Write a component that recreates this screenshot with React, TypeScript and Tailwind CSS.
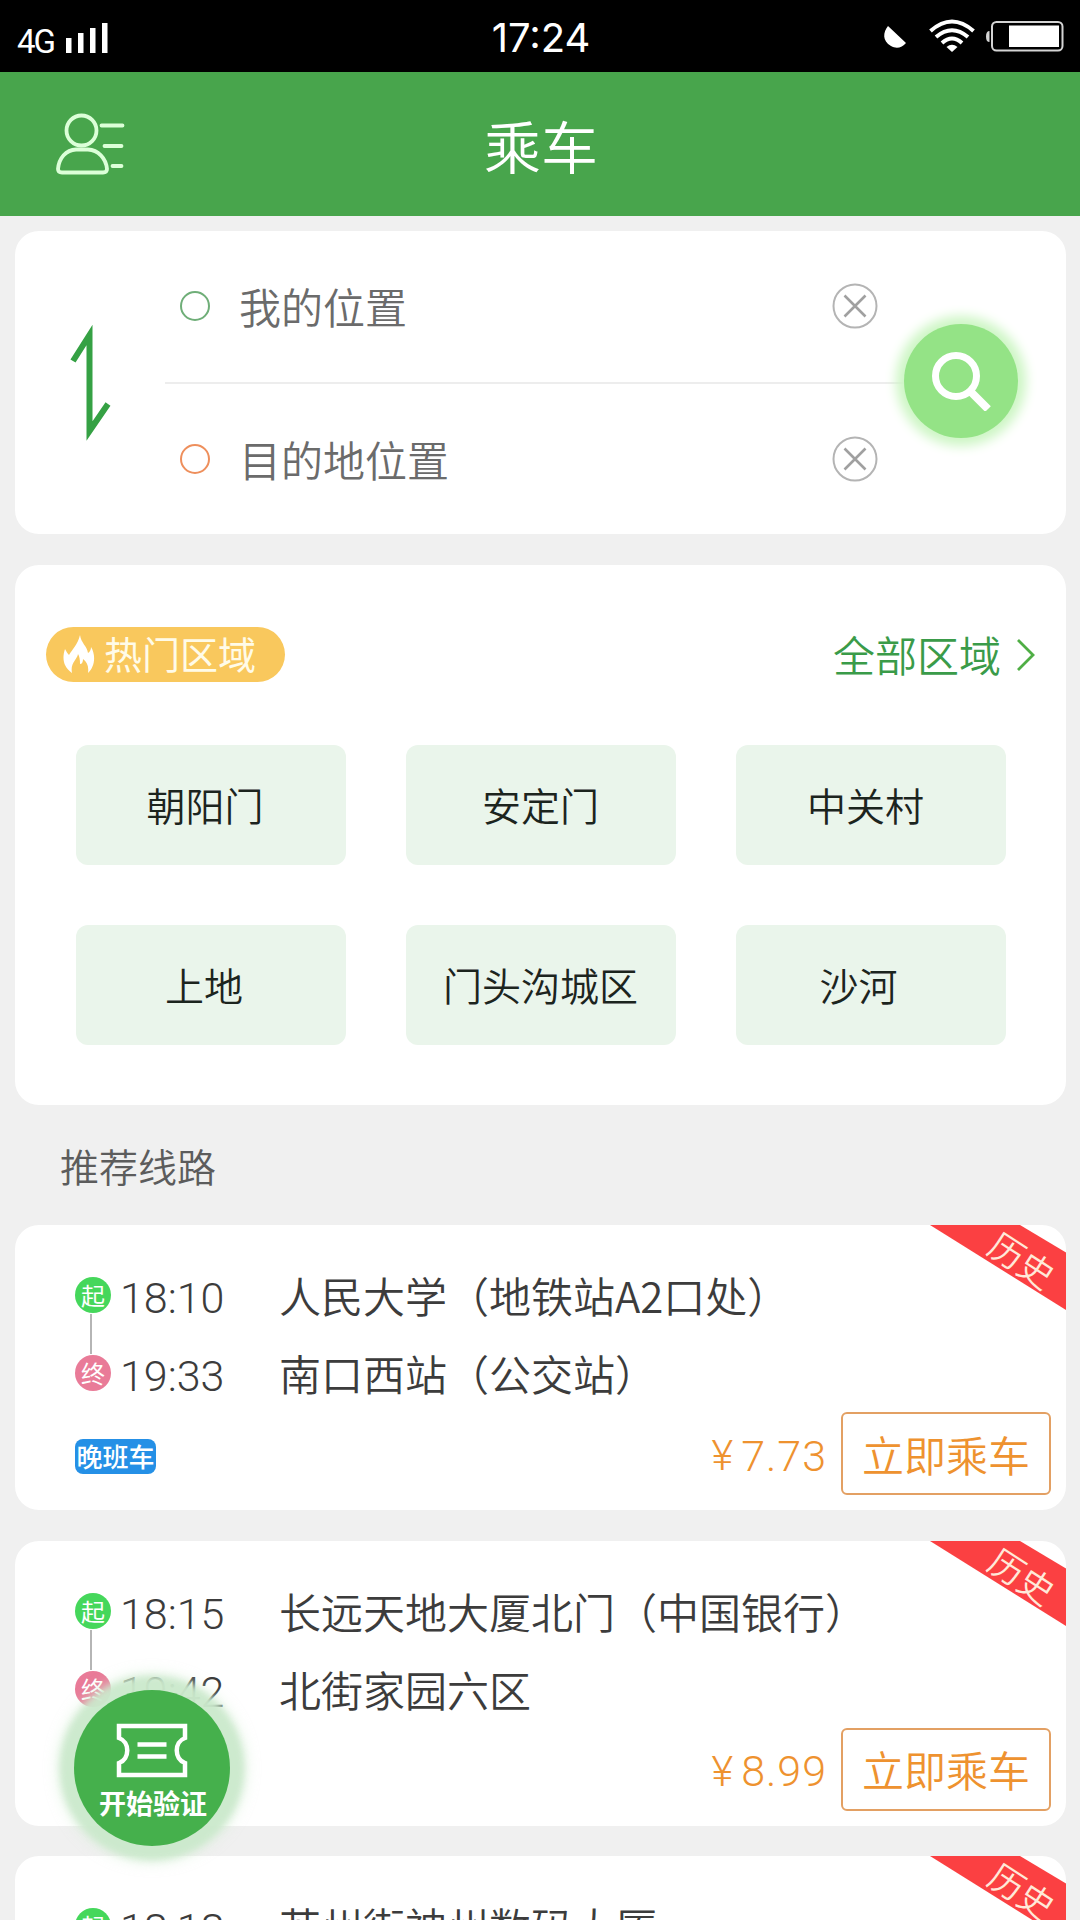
type Area = { name: string; shift: string };
type Route = {
  depart: string;
  arrive: string;
  from: string;
  to: string;
  price: string;
  night?: boolean;
};

const areas: Area[] = [
  { name: "朝阳门", shift: "pr-[11px]" },
  { name: "安定门", shift: "" },
  { name: "中关村", shift: "pr-[10px]" },
  { name: "上地", shift: "pr-[13px]" },
  { name: "门头沟城区", shift: "" },
  { name: "沙河", shift: "pr-[24px]" },
];

const routes: Route[] = [
  { depart: "18:10", arrive: "19:33", from: "人民大学（地铁站A2口处）", to: "南口西站（公交站）", price: "7.73", night: true },
  { depart: "18:15", arrive: "19:42", from: "长远天地大厦北门（中国银行）", to: "北街家园六区", price: "8.99" },
  { depart: "18:18", arrive: "19:45", from: "苏州街神州数码大厦", to: "沙河高教园", price: "8.99" },
];

function StatusBar() {
  return (
    <div className="flex h-[72px] shrink-0 items-center justify-between bg-black text-white">
      <div className="flex w-[340px] items-center pl-[17px]">
        <span className="w-[49px] pt-[11px] font-[Roboto] text-[33px] leading-none tracking-[-2px]">4G</span>
        <svg width="42" height="30" viewBox="0 0 42 30" fill="white" className="mt-[4px]">
          <rect x="0" y="15" width="5.5" height="15" />
          <rect x="12" y="10" width="5.5" height="20" />
          <rect x="24" y="5" width="5.5" height="25" />
          <rect x="36" y="0" width="5.5" height="30" />
        </svg>
      </div>
      <span className="pl-[2px] pt-[4px] font-[Inter] text-[40px] leading-none">17:24</span>
      <div className="flex w-[340px] items-center justify-end pr-[16px]">
        <svg width="182" height="36" viewBox="882 18 182 36" fill="none">
          <path d="M888 26 L906 43 C902 48 896 49 891 46 C882 41 883 32 888 26Z" fill="white" />
          <g stroke="white" strokeWidth="4">
            <path d="M930.500 31 Q952 12 973.500 31" />
            <path d="M936 37 Q952 23.500 968 37" />
            <path d="M942 43 Q952 34 962 43" />
          </g>
          <path d="M946.500 47 Q952 42.500 957.500 47 L952 52Z" fill="white" />
          <rect x="992" y="22" width="70.500" height="28.500" rx="4.500" stroke="#d4d4d4" strokeWidth="2" />
          <rect x="1009" y="25.500" width="50" height="21.500" fill="white" />
          <path d="M989.500 31 Q986 31 986 36.500 Q986 42 989.500 42Z" fill="#d4d4d4" />
        </svg>
      </div>
    </div>
  );
}

function Header() {
  return (
    <div className="flex h-36 shrink-0 items-center justify-between bg-[#48a54c] px-[54px]">
      <svg width="72" height="64" viewBox="54 113 72 64" fill="none" stroke="#dcffd8" strokeWidth="3.8" strokeLinecap="round" className="mt-[2px]">
        <circle cx="81.500" cy="130.500" r="15" />
        <path d="M76 149.500 H88 C98 150 106 158 107 169 Q107 172.500 103 172.500 H62 Q58 172.500 58 169 C59 158 66 150 76 149.500Z" />
        <path d="M101.500 125.500 H122.500 M104.500 146 H121.500 M112.500 166 H121.500" />
      </svg>
      <h1 className="pl-[2px] text-[57px] font-[350] leading-none text-white">乘车</h1>
      <div className="w-[72px]" />
    </div>
  );
}

function ClearIcon() {
  return (
    <svg width="46" height="46" viewBox="0 0 46 46" fill="none" stroke="#b4b4b4">
      <circle cx="23" cy="23" r="21.500" strokeWidth="2" />
      <path d="M12.500 12.500 L33.500 33.500 M33.500 12.500 L12.500 33.500" stroke="#a0a0a0" strokeWidth="2.600" />
    </svg>
  );
}

function PlaceRow({ label, ring }: { label: string; ring: string }) {
  return (
    <div className="flex h-[151px] items-center pb-[2px] pl-[18px] pr-[26px]">
      <span className={`size-[30px] rounded-full border-[2.5px] ${ring}`} />
      <span className="ml-[29px] flex-1 text-[42px] font-[350] leading-none text-[#6b6b6b]">{label}</span>
      <ClearIcon />
    </div>
  );
}

function SearchCard() {
  return (
    <section className="flex h-[303px] shrink-0 rounded-3xl bg-white">
      <div className="w-[147px] pl-[53px] pt-[90px]">
        <svg width="44" height="124" viewBox="0 0 44 124" fill="none" stroke="#35a144" strokeWidth="6" strokeMiterlimit="10">
          <path d="M5 40 L21.500 14 V110 L40 83" />
        </svg>
      </div>
      <div className="w-[742px]">
        <PlaceRow label="我的位置" ring="border-[#6fae78]" />
        <div className="ml-[3px] h-[2px] bg-[#ededed]" />
        <PlaceRow label="目的地位置" ring="border-[#ee8f5c]" />
      </div>
      <button className="mt-[93px] flex size-[114px] items-center justify-center rounded-full bg-[#94e386] shadow-[0_0_12px_8px_#cdf6c4]">
        <svg width="60" height="60" viewBox="0 0 60 60" fill="none" stroke="white" strokeWidth="7" className="ml-[2px]">
          <circle cx="24" cy="25" r="20.500" />
          <path d="M38 40 L56 58" strokeWidth="8" />
        </svg>
      </button>
    </section>
  );
}

function AreaCard() {
  return (
    <section className="mt-[31px] h-[540px] shrink-0 rounded-3xl bg-white pt-[62px]">
      <div className="flex h-[55px] items-center justify-between pl-[31px] pr-[29px]">
        <div className="flex h-[55px] w-[239px] items-center rounded-full bg-[#f9c85d] pl-[17px]">
          <svg width="32" height="39" viewBox="0 0 32 39" fill="white">
            <path d="M17 0 C18 8 24 11 25 18 Q28 16 28 12 C33 20 32 32 25 38 C26 31 24 27 20 24 Q20 29 17 29 Q17 22 15 19 C14 25 7 28 9 38 C0 32 -1 23 2 14 Q4 18 6 20 C9 15 15 9 17 0Z" />
          </svg>
          <span className="ml-[9px] pb-[3px] text-[38px] leading-none text-[#fffbe8]">热门区域</span>
        </div>
        <div className="flex items-center">
          <span className="pb-[2px] text-[42px] font-[350] leading-none text-[#3a9b49]">全部区域</span>
          <svg width="22" height="36" viewBox="0 0 22 36" fill="none" stroke="#4fae45" strokeWidth="2.800" className="ml-[14px]">
            <path d="M3 3 L18 18 L3 33" />
          </svg>
        </div>
      </div>
      <div className="mt-[63px] grid grid-cols-[270px_270px_270px] gap-[60px] pl-[60.5px]">
        {areas.map((a) => (
          <button
            key={a.name}
            className={`flex h-[120px] items-center justify-center rounded-xl bg-[#eaf5eb] pb-[2px] text-[39px] font-[350] leading-none text-[#1c241e] ${a.shift}`}
          >
            {a.name}
          </button>
        ))}
      </div>
    </section>
  );
}

function HistoryRibbon() {
  return (
    <div className="absolute right-0 top-0">
      <svg width="136" height="85" viewBox="0 0 136 85">
        <path d="M0 0 H90 L136 27.500 V85Z" fill="#fb4042" />
      </svg>
      <span className="absolute left-[58px] top-[16px] rotate-[33deg] whitespace-nowrap text-[35px] font-[350] leading-none text-[#ffe9d9]">历史</span>
    </div>
  );
}

function Stop({ mark, tone, time, place }: { mark: string; tone: string; time: string; place: string }) {
  return (
    <div className="flex h-[38px] items-center">
      <span className={`flex size-[36px] items-center justify-center rounded-full text-[24px] leading-none text-white ${tone}`}>{mark}</span>
      <span className="ml-[9px] w-[159px] pt-[7px] font-[Roboto] text-[43px] font-[350] leading-none text-[#3c3c3c]">{time}</span>
      <span className="text-[42px] font-[350] leading-none text-[#3c3c3c]">{place}</span>
    </div>
  );
}

function RouteCard({ route }: { route: Route }) {
  return (
    <section className="relative h-[285px] shrink-0 overflow-hidden rounded-3xl bg-white pl-[60px] pt-[51px]">
      <HistoryRibbon />
      <Stop mark="起" tone="bg-[#45d75b]" time={route.depart} place={route.from} />
      <div className="ml-[15px] h-[40px] w-[2px] bg-[#b5b5b5]" />
      <Stop mark="终" tone="bg-[#e97b98]" time={route.arrive} place={route.to} />
      <div className="mt-[20px] flex h-[83px] items-center pr-[15px]">
        {route.night && (
          <span className="mt-[5px] flex h-[35px] w-[81px] items-center justify-center rounded-lg bg-[#2590e6] text-[26px] font-medium leading-none text-white">晚班车</span>
        )}
        <div className="ml-auto mr-[14px] flex items-center pt-[5px] font-[Roboto] font-[350] leading-none text-[#ee922f]">
          <span className="mr-[8px] text-[42px]">¥</span>
          <span className="text-[43px] tracking-[1px]">{route.price}</span>
        </div>
        <button className="h-[83px] w-[210px] rounded-md border-[2.5px] border-[#e3a063] text-[42px] font-[350] leading-none text-[#ee922f]">立即乘车</button>
      </div>
    </section>
  );
}

function VerifyButton() {
  return (
    <button className="absolute left-[74px] top-[1690px] flex size-[156px] flex-col items-center rounded-full bg-[#45b04c] pt-[33px] text-white shadow-[0_0_6px_14px_#cbe8ccee,0_0_12px_18px_#d5efd580]">
      <svg width="72" height="55" viewBox="0 0 72 55" fill="none" stroke="white" strokeWidth="4.500">
        <path d="M3 3 H69 V15 C58 19 58 36 69 40 V52 H3 V40 C14 36 14 19 3 15Z" />
        <path d="M21.500 21.500 H50.500 M21.500 33.500 H50.500" />
      </svg>
      <span className="mt-[11px] pl-[2px] text-[27px] font-bold leading-none">开始验证</span>
    </button>
  );
}

export default function App() {
  return (
    <div className="relative flex h-[1920px] w-[1080px] flex-col overflow-hidden bg-[#f0f0f0] font-['Noto_Sans_CJK_SC',sans-serif]">
      <StatusBar />
      <Header />
      <main className="flex flex-1 flex-col pl-[15px] pr-[14px] pt-[15px]">
        <SearchCard />
        <AreaCard />
        <h2 className="h-[120px] shrink-0 pl-[45px] pt-[41px] text-[39px] font-[350] leading-none text-[#5c5c5c]">推荐线路</h2>
        <div className="flex flex-col gap-[30.5px]">
          {routes.map((r) => (
            <RouteCard key={r.depart} route={r} />
          ))}
        </div>
      </main>
      <VerifyButton />
    </div>
  );
}
